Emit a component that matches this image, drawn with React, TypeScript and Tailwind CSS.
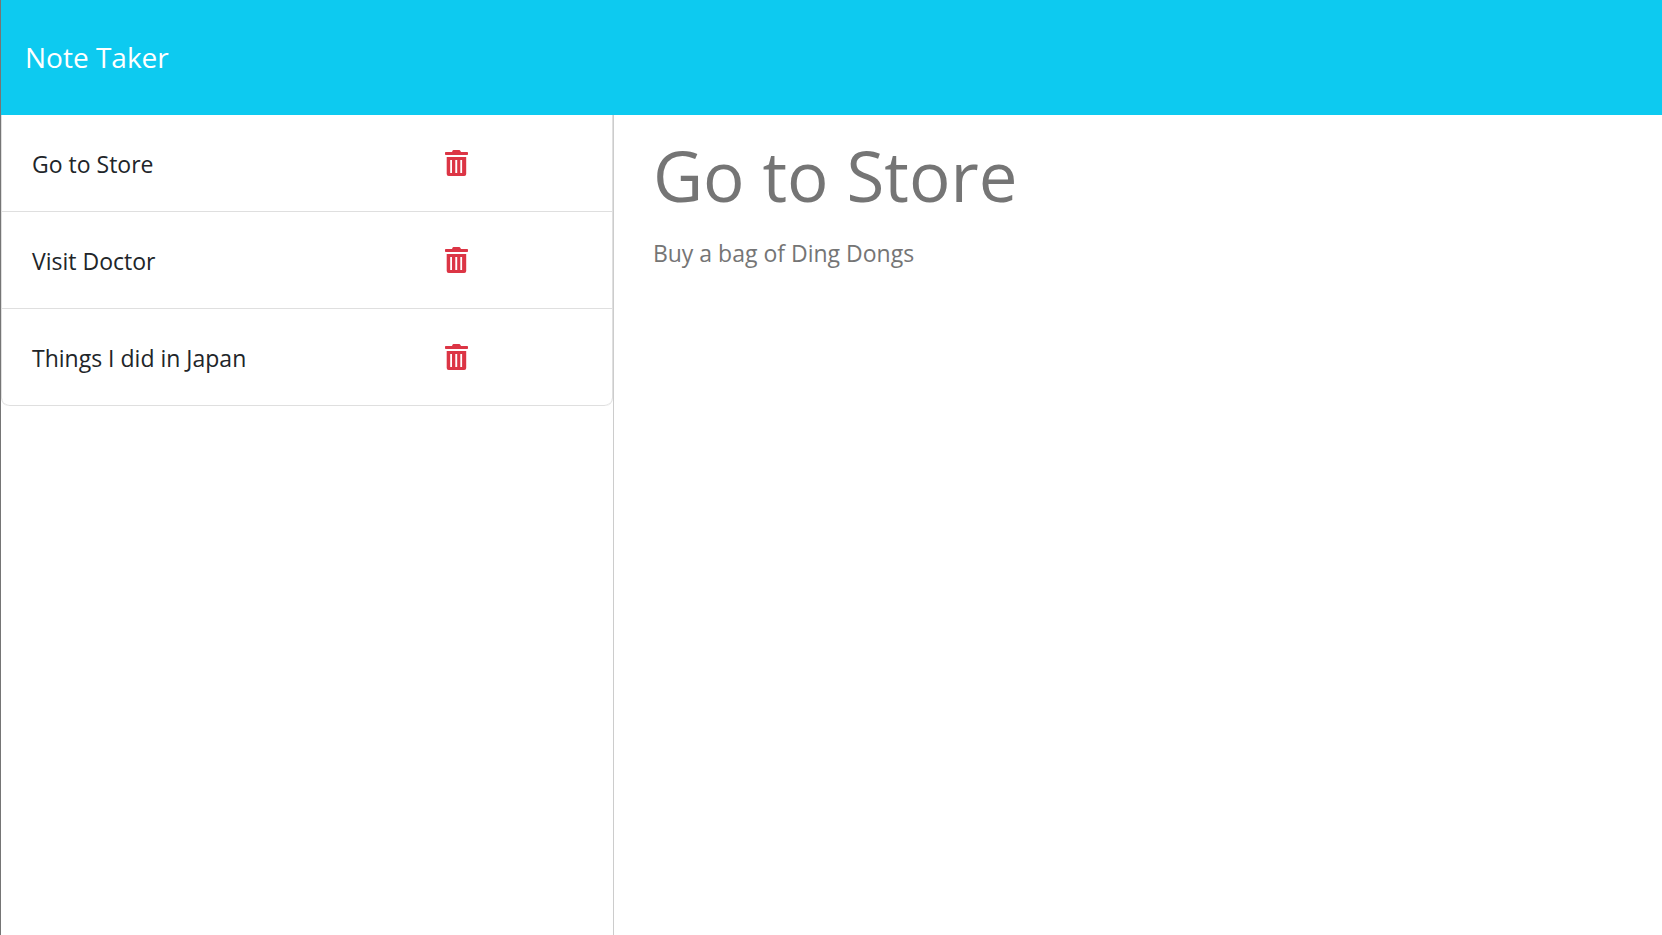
const notes = [
  { id: 1, title: 'Go to Store', text: 'Buy a bag of Ding Dongs' },
  { id: 2, title: 'Visit Doctor', text: '' },
  { id: 3, title: 'Things I did in Japan', text: '' },
];

function TrashIcon() {
  return (
    <svg viewBox="0 0 23 26" className="h-[26px] w-[23px]" fill="currentColor" aria-hidden="true">
      <path d="M.8 2H7L7.500 .7Q7.800 0 8.500 0H14.200Q15 0 15.300 .7L16 2H22.200Q23 2 23 2.800V4.200Q23 5 22.200 5H.8Q0 5 0 4.200V2.800Q0 2 .8 2Z" />
      <path
        fillRule="evenodd"
        d="M1.700 7H21.200V24Q21.200 26 19.200 26H3.700Q1.700 26 1.700 24ZM5.200 10V23H7V10ZM10.300 10V23H12.200V10ZM15.300 10V23H17.100V10Z"
      />
    </svg>
  );
}

export default function App() {
  const active = notes[0];
  return (
    <div className="flex min-h-screen flex-col border-l border-[#757575] bg-white font-['Open_Sans','Noto_Sans',sans-serif] text-[#212529]">
      <nav className="flex h-[115px] items-center bg-[#0dcaf0] px-6 pb-[2px]">
        <a href="#" className="text-[28px] leading-[42px] text-white">
          Note Taker
        </a>
      </nav>
      <div className="flex grow">
        <aside className="w-[36.9%] shrink-0 border-r border-[#cccccc]">
          <ul className="overflow-hidden rounded-b-lg border-x border-[#dfdfdf]">
            {notes.map((note) => (
              <li
                key={note.id}
                className="flex h-[97px] items-center border-b border-[#dfdfdf] pl-[30px] last:rounded-b-lg"
              >
                <button type="button" className="w-[413px] shrink-0 pt-[2px] text-left text-[23px] leading-9">
                  {note.title}
                </button>
                <button type="button" aria-label={`Delete ${note.title}`} className="text-[#dc3545]">
                  <TrashIcon />
                </button>
              </li>
            ))}
          </ul>
        </aside>
        <main className="grow px-[39px] pt-5 text-[#757575]">
          <h1 className="text-[69px] leading-[80px]">{active.title}</h1>
          <p className="mt-5 text-[23px] leading-9">{active.text}</p>
        </main>
      </div>
    </div>
  );
}
